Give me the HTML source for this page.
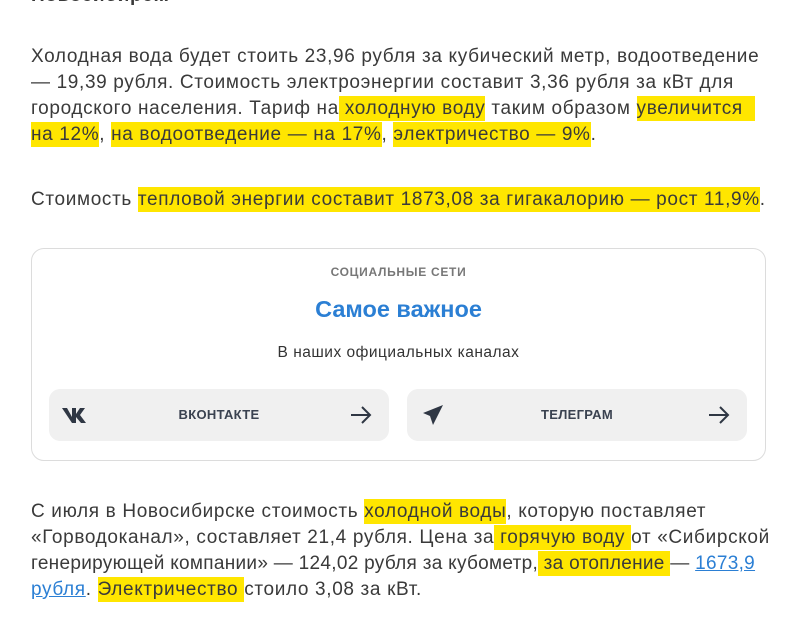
<!DOCTYPE html>
<html><head><meta charset="utf-8"><style>
body{margin:0;width:800px;height:633px;background:#fff;overflow:hidden;position:relative;font-family:"Liberation Sans",sans-serif;color:#3a3a3a}
.l{position:absolute;left:31px;white-space:nowrap;font-size:19px;letter-spacing:.65px;line-height:26px}
.h{background:#ffe600;padding:2px 0}
a{color:#2b7fd4}
.card{position:absolute;left:31px;top:248px;width:735px;height:213px;border:1px solid #dcdcdc;border-radius:13px;box-sizing:border-box}
.c{position:absolute;left:0;right:0;text-align:center;font-family:"Liberation Sans",sans-serif}
.btn{position:absolute;top:140px;width:340px;height:52px;background:#f0f0f0;border-radius:11px;font-family:"Liberation Sans",sans-serif}
.btn span{position:absolute;left:0;right:0;top:18px;text-align:center;font-size:13px;font-weight:bold;color:#3a4250;letter-spacing:.3px}
.btn svg{position:absolute}
</style></head><body>
<div class="l" style="top:-17px;font-weight:bold">Новосибирск.</div>
<div class="l" style="top:44px">Холодная вода будет стоить 23,96 рубля за кубический метр, водоотведение</div>
<div class="l" style="top:70px">— 19,39 рубля. Стоимость электроэнергии составит 3,36 рубля за кВт для</div>
<div class="l" style="top:96px">городского населения. Тариф на<span class="h"> холодную воду</span> таким образом <span class="h">увеличится&nbsp;&nbsp;</span></div>
<div class="l" style="top:122px"><span class="h">на 12%</span>, <span class="h">на водоотведение — на 17%</span>, <span class="h">электричество — 9%</span>.</div>
<div class="l" style="top:187px">Стоимость <span class="h">тепловой энергии составит 1873,08 за гигакалорию — рост 11,9%</span>.</div>
<div class="card">
<div class="c" style="top:16px;font-size:12px;font-weight:bold;color:#777;letter-spacing:.7px">СОЦИАЛЬНЫЕ СЕТИ</div>
<div class="c" style="top:47px;font-size:23.5px;font-weight:bold;color:#2b7fd4">Самое важное</div>
<div class="c" style="top:95px;font-size:15.5px;color:#333;letter-spacing:.5px">В наших официальных каналах</div>
<div class="btn" style="left:17px"><svg style="left:12px;top:17px" width="28" height="18" viewBox="0 0 28 18"><path d="M1 2h5l5 9V2h4v6l4-6h5l-5 7 6 8h-5l-5-6v6h-4L1 2z" fill="#2f3744"/></svg><span>ВКОНТАКТЕ</span><svg style="left:300px;top:16px" width="24" height="20" viewBox="0 0 24 20"><path d="M2 10h19M13 2l8 8-8 8" stroke="#2f3744" stroke-width="2" fill="none"/></svg></div>
<div class="btn" style="left:375px"><svg style="left:15px;top:15px" width="22" height="22" viewBox="0 0 22 22"><path d="M21 1L1 9l7 3 3 9z" fill="#2f3744"/></svg><span>ТЕЛЕГРАМ</span><svg style="left:300px;top:16px" width="24" height="20" viewBox="0 0 24 20"><path d="M2 10h19M13 2l8 8-8 8" stroke="#2f3744" stroke-width="2" fill="none"/></svg></div>
</div>
<div class="l" style="top:499px">С июля в Новосибирске стоимость <span class="h">холодной воды</span>, которую поставляет</div>
<div class="l" style="top:525px">«Горводоканал», составляет 21,4 рубля. Цена за<span class="h"> горячую воду </span>от «Сибирской</div>
<div class="l" style="top:551px;letter-spacing:.3px">генерирующей компании» — 124,02 рубля за кубометр,<span class="h"> за отопление </span> — <a href="#">1673,9</a></div>
<div class="l" style="top:577px"><a href="#">рубля</a>. <span class="h">Электричество </span>стоило 3,08 за кВт.</div>
</body></html>
